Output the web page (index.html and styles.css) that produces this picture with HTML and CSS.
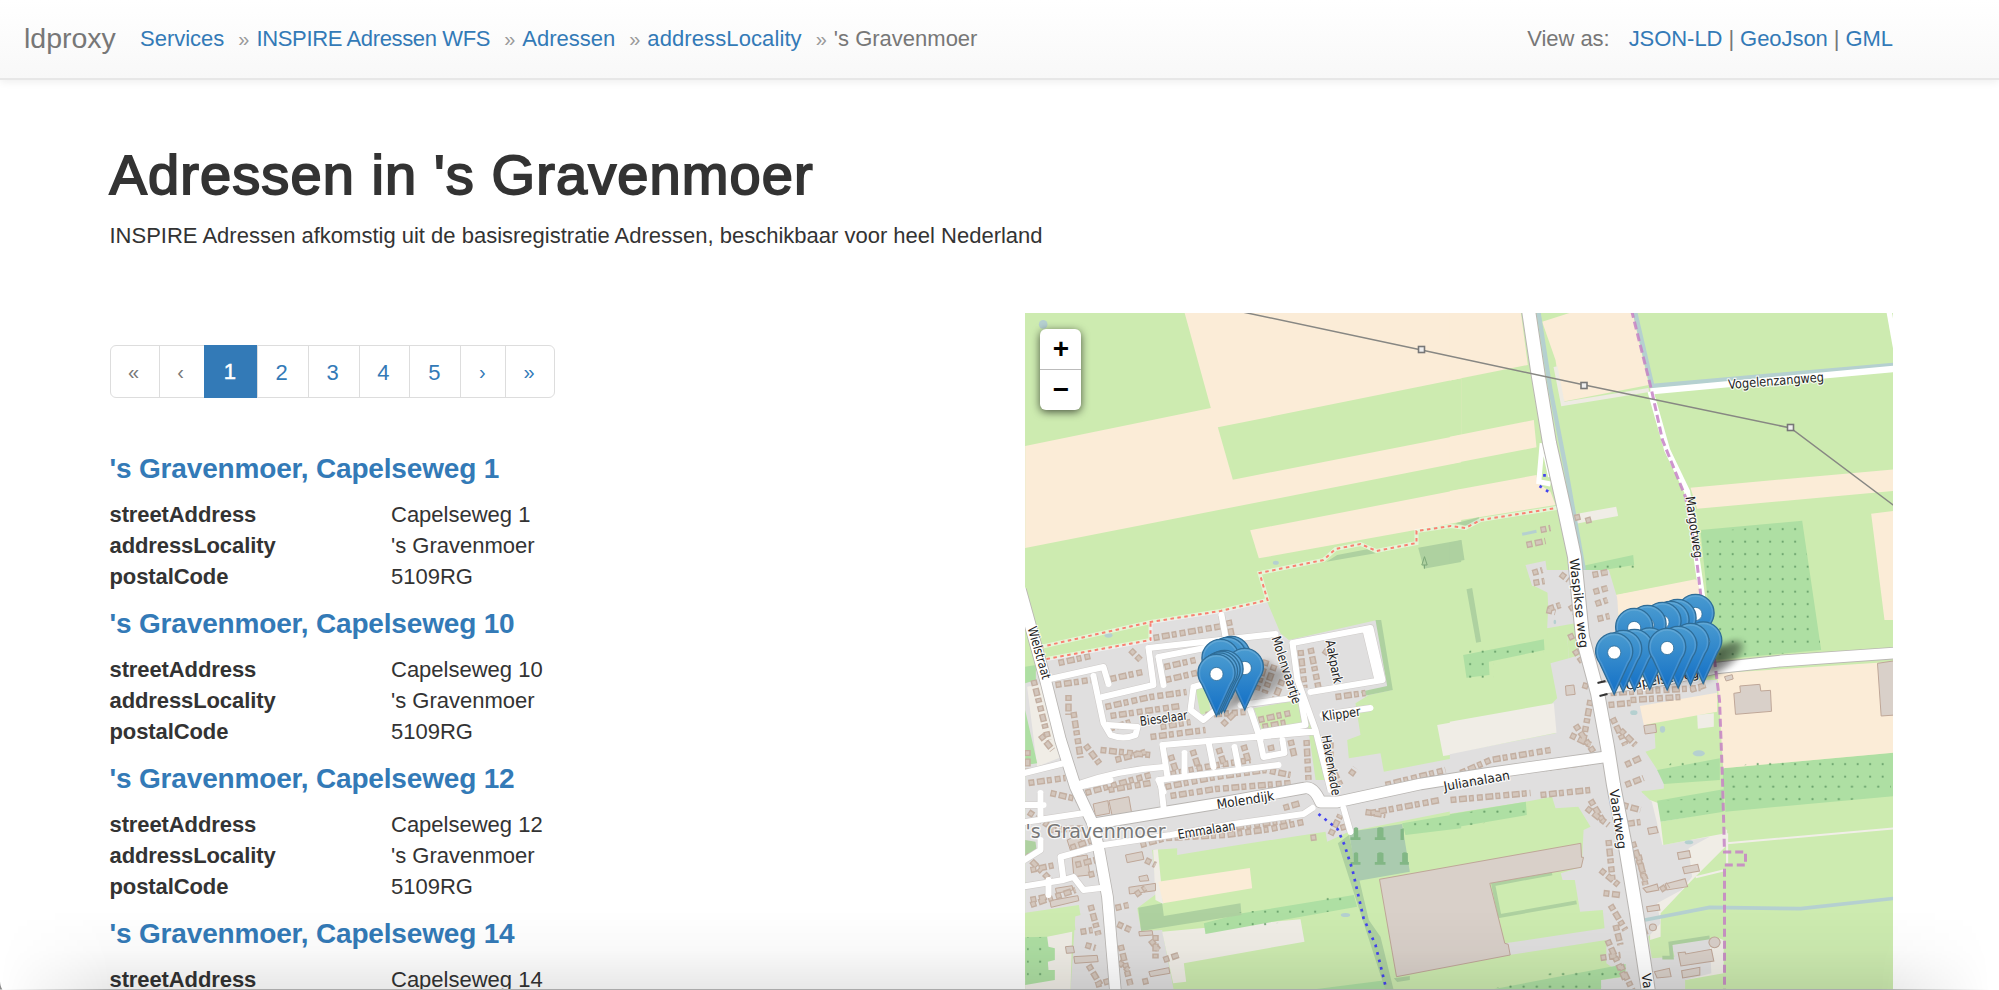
FILE: index.html
```html
<!DOCTYPE html>
<html lang="nl">
<head>
<meta charset="utf-8">
<title>Adressen in 's Gravenmoer</title>
<link rel="stylesheet" href="styles.css">
</head>
<body>
<header class="navbar">
  <div class="brand">ldproxy</div>
  <ol class="breadcrumb">
    <li><a>Services</a></li>
    <li><a class="caps">INSPIRE Adressen WFS</a></li>
    <li><a>Adressen</a></li>
    <li><a class="wide">addressLocality</a></li>
    <li>'s Gravenmoer</li>
  </ol>
  <div class="formats"><span class="formats-label">View as:</span><a>JSON-LD</a><i>|</i><a>GeoJson</a><i>|</i><a>GML</a></div>
</header>
<main class="container">
  <h1>Adressen in 's Gravenmoer</h1>
  <p class="lead">INSPIRE Adressen afkomstig uit de basisregistratie Adressen, beschikbaar voor heel Nederland</p>
  <div class="row">
    <section class="list">
      <ul class="pagination">
        <li class="off edge">«</li><li class="off arrow">‹</li><li class="active">1</li><li>2</li><li>3</li><li>4</li><li>5</li><li class="arrow">›</li><li class="edge">»</li>
      </ul>
      <article><h4>'s Gravenmoer, Capelseweg 1</h4>
        <dl><dt>streetAddress</dt><dd>Capelseweg 1</dd><dt>addressLocality</dt><dd>'s Gravenmoer</dd><dt>postalCode</dt><dd>5109RG</dd></dl></article>
      <article><h4>'s Gravenmoer, Capelseweg 10</h4>
        <dl><dt>streetAddress</dt><dd>Capelseweg 10</dd><dt>addressLocality</dt><dd>'s Gravenmoer</dd><dt>postalCode</dt><dd>5109RG</dd></dl></article>
      <article><h4>'s Gravenmoer, Capelseweg 12</h4>
        <dl><dt>streetAddress</dt><dd>Capelseweg 12</dd><dt>addressLocality</dt><dd>'s Gravenmoer</dd><dt>postalCode</dt><dd>5109RG</dd></dl></article>
      <article><h4>'s Gravenmoer, Capelseweg 14</h4>
        <dl><dt>streetAddress</dt><dd>Capelseweg 14</dd></dl></article>
    </section>
    <section class="map">
      <svg class="tiles" viewBox="1024.5 313 868.5 677" preserveAspectRatio="none">
        <defs>
          <pattern id="dots" width="37.5" height="37.5" patternUnits="userSpaceOnUse" x="1.500" y="0"><circle cx="20" cy="20" r="3.200" fill="#67a06a"/></pattern>
          <linearGradient id="blue" x1="0" y1="0" x2="0" y2="1"><stop offset="0" stop-color="#4a9bd0"/><stop offset="1" stop-color="#126fc6"/></linearGradient>
          <filter id="soft" x="-50%" y="-50%" width="200%" height="200%"><feGaussianBlur stdDeviation="3"/></filter>
          <g id="shade"><path d="M0 0L12-24Q24-44 38-42Q46-34 28-18Z" fill="#000" opacity=".26" filter="url(#soft)"/></g>
          <g id="pin"><path d="M0-1L-14.6-32.5C-17-36-18.6-40-18.6-44A18.6 18.6 0 0 1 18.6-44C18.6-40 17-36 14.6-32.5Z" fill="url(#blue)" stroke="#2e6c97" stroke-width="1.3"/><path d="M0-4L-13.2-33C-15.5-36-17-40-17-44A17 17 0 0 1 17-44C17-40 15.5-36 13.2-33Z" fill="none" stroke="#fff" stroke-opacity=".13" stroke-width="1.5"/><circle cy="-43" r="6.6" fill="#fff" stroke="#2e6c97" stroke-width=".8"/></g>
          <path id="main" d="M1527.7 308L1538 377L1549 443L1564 510L1574 557L1582 637L1597 693L1607 747L1613 785L1625 847L1636 913L1648 992"/>
          <g id="roads">
            <path d="M1598 689L1668 679L1716 668L1780 661L1895 653"/>
            <path d="M1604 757L1483 774L1420 784L1337 802H1320Q1313 786 1304 788L1220 803L1092 824"/>
            <path d="M1020 590L1045 680L1060 740L1075 787L1092 823L1098 847L1107 897L1115 992"/>
          </g>
          <g id="lanes">
            <path d="M1312 808L1303 814L1233 824L1170 835L1103 845L1060 857L1063 880L1020 887M1063 880L1073 877L1083 890L1100 888"/>
            <path d="M1024 822L1084 813M1160 780L1163 807M1077 787L1110 780M1040 793V816M1024 805H1043M1048 880V895M1024 860L1040 850V840"/>
            <path d="M1045 680L1103 667L1108 684M1093 676L1103 723L1110 735Q1123 740 1135 735L1137 727L1107 725M1102 697L1153 685L1148 648M1148 648L1275 634M1158 657L1220 645M1158 657L1163 685M1221 615L1225 637"/>
            <path d="M1193 687L1190 710L1203 720L1215 710M1193 687L1207 683M1240 705L1300 697M1250 710L1260 740M1162 745L1310 732M1162 745L1167 777M1208 742L1213 767M1234 747L1238 767M1184 753V773M1258 733L1263 757L1284 753L1282 740M1262 732L1305 725L1300 697"/>
            <path d="M1075 785Q1117 770 1163 767M1158 780L1278 765M1158 780L1163 792M1292 643L1370 628L1382 680L1310 692M1292 643L1297 680L1315 730M1365 630L1377 680M1315 732L1287 732M1322 715L1370 708M1024 773L1064 763M1315 730L1330 790M1343 808L1350 832"/>
          </g>
        </defs>
        <rect x="1024" y="313" width="870" height="680" fill="#cdebb0"/>
        <!-- fields north-west -->
        <g transform="translate(1020 310) scale(.33333)">
          <path class="farm" d="M490 0H1322V457L14 714V408L571 294Z"/>
          <path class="grass" d="M592 352L1322 205V375L637 509Z"/>
          <path class="farm" d="M689 661L1322 538V635L715 745Z"/>
          <path class="wood" d="M918 755L950 735L1040 718L1065 730ZM1193 713L1322 690V756L1210 776Z"/>
          <circle class="water" cx="68" cy="43" r="13"/><ellipse class="water" cx="766" cy="758" rx="9" ry="6"/>
          <path d="M1212 740L1204 765H1220ZM1212 765V776" fill="none" stroke="#7ba777" stroke-width="3"/>
        </g>
        <!-- fields north-east -->
        <g transform="translate(1450 310) scale(.33333)">
          <path class="farm" d="M-2 0H210L232 165L-2 211.500ZM-2 380L250 330L258 412L-2 462ZM-2 543L258 495L262 520L300 545L315 585L-2 635Z"/>
          <path class="farm" d="M275 35L385 0H545L595 225L335 275L315 150Z"/>
          <path d="M315 170L337 282L595 240" fill="none" stroke="#eeebe3" stroke-width="12"/>
          <path class="farm" d="M720 533L1329 478V543L740 596ZM1262 611L1329 603V930H1302ZM495 855L735 808L760 930H510Z"/>
          <path class="trees" d="M750 660L1055 632L1112 1020L790 1050ZM395 768L548 735L551 765L400 790Z"/>
          <path class="dots" d="M750 670L1055 636L1112 1020L790 1050ZM420 750H553V775H410Z"/>
          <path class="wood" d="M48 838L65 834L92 995L77 998ZM-2 700L33 690L42 750L-2 758ZM15 640L85 622L90 635L50 648Z"/>
          <path class="beige" d="M360 615L497 590L503 618L372 642Z"/>
          <path class="town" d="M225 765L285 752L290 790L475 785L500 930H295L290 825L245 828Z"/>
          <path d="M263 0L300 240L345 470L400 780" fill="none" stroke="#b5d0d0" stroke-width="13"/>
          <path d="M552 0L605 228L1329 165" fill="none" stroke="#b5d0d0" stroke-width="14"/>
          <path d="M600 244L1329 177" fill="none" stroke="#fff" stroke-width="19"/>
          <path d="M600 244L650 420L710 545L755 860" fill="none" stroke="#fff" stroke-width="18"/>
          <path d="M1315 0L1340 140" stroke="#fff" stroke-width="16"/>
          <path d="M275 400L265 515L300 522M285 430L300 500" stroke="#fff" stroke-width="15" fill="none"/>
          <path d="M215 673L258 664" stroke="#b5d0d0" stroke-width="9"/>
        </g>
        <!-- village -->
        <g transform="translate(1020 580) scale(.33333)">
          <path class="town" d="M75 240L390 180L385 130L600 95L740 65L780 160L805 180L1070 120L1115 330L1045 345L1005 370L1020 465L980 480L985 535L1080 520L1090 575L1322 530V632H14V310Z"/>
          <path class="wood" d="M1065 120H1082L1117 330L1030 348L1020 335L1100 318Z"/>
          <path class="beige" d="M20 320L70 310L125 530L50 560ZM1250 435L1322 422V520L1268 528Z"/>
          <path class="trees" d="M14 260L46 255V300L14 310ZM14 390L50 550L14 555Z"/>
          <path class="grass" d="M525 325L560 320L570 395L540 405ZM700 385L830 360L855 440L730 465ZM850 350L890 460L935 632H890L868 480Z"/>
          <ellipse class="water" cx="264" cy="166" rx="12" ry="7"/>
        </g>
        <g transform="translate(1450 570) scale(.33333)">
          <path class="town" d="M232 0H475L505 100L500 250L520 330H800V370L570 410L590 470L612 480L615 535L585 545L640 630V662H-2V550L315 490L305 400L320 385L300 280L355 265L350 195L290 175L295 70L245 45Z"/>
          <path class="grass" d="M290 175L400 155L405 250L355 265L350 195L290 205Z"/>
          <path class="beige" d="M-2 455L310 400L318 488L-2 553Z"/>
          <path class="trees" d="M38 255L280 208L282 240L115 275L117 315L48 323ZM818 595L1329 548V662H815ZM620 600L808 565V630L640 642Z"/>
          <path class="farm" d="M500 75L740 30L790 230L510 260ZM568 408L800 368V425L580 465ZM800 310L1329 275V548L818 595L808 430Z"/>
          <path class="dots" d="M60 235H280V255H130V325H50V260ZM838 600L940 565H1320V640H830ZM640 600L670 570H800V630H640Z"/>
          <path class="beige" d="M740 435L790 430V470L742 476Z"/>
          <path class="house" d="M868 348L928 343L931 363L960 361L963 424L855 433L850 370L870 367ZM1281 280L1335 272V435L1292 438ZM822 320L845 314L848 327L827 333ZM580 467L615 462L618 487L584 492ZM345 348L370 345L374 373L347 376Z"/>
          <ellipse class="water" cx="745" cy="550" rx="18" ry="9"/><ellipse class="water" cx="636" cy="478" rx="8" ry="10"/><ellipse class="water" cx="550" cy="428" rx="11" ry="7"/><ellipse class="water" cx="313" cy="156" rx="4" ry="7"/>
        </g>
        <!-- south-west -->
        <g transform="translate(1020 780) scale(.33333)">
          <path class="town" d="M14 0H1322V88L985 155L920 185L915 155L620 200L470 225V205L395 210L410 340L350 385L362 453L425 450L460 632H150L165 400H14Z"/>
          <path class="grass" d="M14 398L175 375L180 405L160 410L165 450L14 472Z"/>
          <path class="beige" d="M80 470L155 455L150 632H14V600ZM398 210L412 208L428 372L405 360ZM425 455L840 418L852 485L490 550L497 605L458 610Z"/>
          <path class="trees" d="M14 472L80 470L84 500L103 505V540L82 545L84 570L103 570V600L14 615ZM665 400L1000 345L1010 380L555 462L550 430ZM1145 130L1322 100V145L1155 165ZM850 632L1100 600L1105 632Z"/>
          <path class="farm" d="M413 305L688 264L695 325L428 370Z"/>
          <path class="wood" d="M353 383L425 370L430 408L660 370L663 405L362 453ZM14 180L45 185L48 210L14 230ZM952 190L985 165L1045 420L1080 470L1120 632H1095ZM1120 595L1168 588V600L1130 606Z"/>
          <path class="dots" d="M20 472H82V600H20ZM665 395L900 380V350H990V380L680 450H560V430ZM1150 125L1322 110V150H1155Z"/>
          <path d="M985 155L1145 132L1168 275L1010 303Z" fill="#aacbaf"/>
          <path d="M990 180H1020V172H1013V145Q1007 138 1000 145V172H990ZM1063 180H1095V172H1089V145Q1079 138 1070 145V172H1063ZM1063 254H1095V246H1089V220Q1079 213 1070 220V246H1063ZM990 254H1020V246H1013V220Q1007 213 1000 220V246H990ZM1138 254H1165V246H1162V220Q1152 213 1145 220V246H1138ZM1140 180H1150V145L1140 148Z" fill="#82b785"/>
          <path class="house" d="M265 62L325 50L333 97L275 107ZM218 72L262 62L268 100L225 108ZM315 225L365 215L370 238L320 248ZM325 322L405 310V332L327 342ZM355 290L380 285L385 302L358 304ZM160 530L230 526L233 545L163 550ZM385 575L445 563L448 580L390 590ZM135 500L158 498L162 518L138 520ZM355 455L395 452L397 465L357 468ZM88 362L172 347L175 362L92 382ZM105 325L155 317L157 330L108 340ZM155 232L200 225L208 285L160 290ZM140 180Q165 165 185 182L180 212H150Z"/>
          <ellipse class="water" cx="975" cy="405" rx="14" ry="6"/>
        </g>
        <!-- south-east -->
        <g transform="translate(1450 780) scale(.35016 .33333)">
          <path class="beige" d="M570 60L790 150V195L690 300L600 400V470L570 480ZM755 470L780 480V580L670 600Z"/>
          <path class="town" d="M-2 0H590L545 35L575 65L605 195L740 170L680 205L690 290L660 330L590 370L600 430L565 470L575 535L640 530L630 490L740 472L745 580L670 600V632H430V600L500 590L445 550V480L168 525L155 490L440 445L435 390L370 395L355 300H320L315 280L375 260L380 150L400 140L365 80L300 85L290 50L215 65L-2 101Z"/>
          <path class="grass" d="M545 35L780 0V30L590 62ZM600 125L785 92V160L608 195Z"/>
          <path class="trees" d="M-2 103L215 65L218 105L-2 145ZM782 0H1268V48L785 95ZM590 62L780 28V95L600 125ZM100 632L500 552V588L430 600V632Z"/>
          <path class="dots" d="M-2 110L90 88H215V110L-2 145ZM800 0H1258V35L1100 70H785ZM590 62L780 50V75L700 110H600ZM110 630L300 575H495V595H430V632Z"/>
          <path class="house" d="M648 218L682 212L686 232L652 238ZM663 262L706 253L711 273L668 281ZM613 312L670 296L677 320L618 330ZM650 518L670 516L672 522L745 508L752 543L658 558ZM660 572L712 562V585L663 594ZM563 145L588 140L593 158L567 163ZM582 575L625 565L630 590L590 594ZM560 380L595 374L598 390L563 395ZM550 325L590 312L595 330L560 337Z"/>
          <path d="M290 280L122 313L140 408L360 367M605 533H632L628 490L740 472" fill="none" stroke="#aed1a0" stroke-width="11"/>
          <circle class="house" cx="754" cy="487" r="16"/><circle class="house" cx="578" cy="442" r="10"/>
          <path d="M790 190L1268 145M700 292L785 270M790 160V250" fill="none" stroke="#f1eee8" stroke-width="6"/>
          <path d="M555 420L740 382L1000 386L1268 355" fill="none" stroke="#b5d0d0" stroke-width="11"/>
          <ellipse class="water" cx="681" cy="187" rx="12" ry="6"/>
        </g>
        <!-- greenhouse complex -->
        <path class="hall" d="M1379 879.300L1580.300 843.300L1581 857.300H1583L1580.700 867.300L1489.300 883.300L1504.300 943.300L1507.700 944.300L1509.700 955L1396 976.700Z"/>
        <!-- rows of houses -->
        <g class="rows">
          <path id="r1" d="M1153 638L1222 626M1228 620L1232 640M1110 679L1142 672M1058 663L1090 656M1130 650L1140 660M1164 667L1195 660M1165 680L1200 672M1105 707L1150 697L1186 692M1110 716L1180 706M1108 729L1130 722M1160 727L1190 722M1150 737L1205 730M1055 685L1090 680M1068 695V715M1073 712L1080 758M1085 745L1100 765M1100 750L1150 755M1115 760L1145 752M1266 660L1256 690M1274 665L1264 693M1282 680L1274 700M1222 725L1235 712M1205 715L1245 712M1300 650L1304 688M1310 648L1318 688M1323 650L1330 655M1258 720L1290 713M1262 727L1288 722M1335 697L1365 693"/>
          <path id="r2" d="M1170 755L1175 770M1192 750L1198 768M1218 748L1224 766M1243 745L1248 762M1270 745L1272 755M1170 774L1205 767L1250 760M1165 787L1215 777L1265 770L1290 775M1170 796L1215 789L1290 783M1108 790L1150 783M1085 793L1150 775M1290 740L1294 757M1306 740L1308 780M1322 750L1340 785M1330 775V740M1350 775L1355 768M1040 735L1052 750M1033 680L1048 740M1027 750V770M1028 783L1065 778M1050 793L1080 800L1085 812M1028 812L1055 830M1050 830L1085 828M1385 785L1445 770M1370 813L1440 800M1365 812L1385 815"/>
          <path id="r3" d="M1460 773L1490 760L1550 750M1545 768L1590 762M1450 800L1530 793M1540 795L1590 790M1590 700L1583 740M1570 735L1590 745M1575 725L1595 755M1608 705L1630 703M1620 730L1635 745M1612 718L1625 745M1625 765L1640 758M1625 785L1643 778M1622 805L1640 810M1618 825L1640 822M1590 800L1603 822M1586 808L1608 825M1608 840L1612 880M1600 870L1618 885M1603 893L1620 895M1610 905L1625 930M1632 842L1645 880M1638 855L1645 885M1615 925L1620 945M1607 940L1625 980M1600 958L1620 955M1620 965L1632 990M1660 890L1668 885M1645 935L1640 920"/>
          <path id="r4" d="M1592 575L1607 572M1593 592L1607 588M1595 604L1607 600M1597 619L1609 616M1560 574L1568 580M1548 609L1560 605M1570 605L1578 618M1568 638L1576 634M1574 650L1582 662M1582 685L1592 688M1532 573L1542 570M1533 583L1544 581M1526 545L1545 541M1540 530L1550 528M1574 518L1582 516M1585 521L1592 519M1610 693L1700 688M1630 700L1680 697M1690 690L1705 685M1546 610L1555 612"/>
          <path id="r5" d="M1140 845L1165 838L1225 835L1270 829L1303 822M1175 837L1200 832L1290 820M1283 808L1300 803M1310 838L1318 837M1330 835L1340 815M1340 828L1350 825M1070 848L1098 838M1075 865L1095 860M1088 875L1100 872M1030 900L1050 896M1030 905L1075 890M1115 908L1128 905M1117 924L1130 930M1120 945L1130 985M1118 962L1128 970M1150 940L1158 950M1155 935V960M1163 960L1178 955M1142 982L1150 980M1090 905L1098 935M1080 932L1092 930M1085 945L1095 948M1088 965L1100 985M1095 985L1112 980M1135 895L1145 888M1145 860L1155 865M1030 870L1055 865M1025 855L1050 880"/>
        </g>
        <g class="rows-in"><use href="#r1"/><use href="#r2"/><use href="#r3"/><use href="#r4"/><use href="#r5"/></g>
        <!-- streets -->
        <use href="#lanes" class="lane-case"/><use href="#roads" class="road-case"/><use href="#main" class="main-case"/>
        <use href="#lanes" class="lane"/><use href="#roads" class="road"/><use href="#main" class="main-road"/>
        <path d="M1597 683L1605 681M1599 696L1607 694" stroke="#333" stroke-width="2"/>
        <!-- tracks and boundaries -->
        <path class="track-bg" d="M1040 647L1150 622L1220 611L1267 600L1259 573L1323 560L1335 549L1360 544L1376 551L1416 543V531L1450 526L1465 528L1480 520L1556 508M1046 659L1150 640V623"/>
        <path class="track" d="M1040 647L1150 622L1220 611L1267 600L1259 573L1323 560L1335 549L1360 544L1376 551L1416 543V531L1450 526L1465 528L1480 520L1556 508M1046 659L1150 640V623"/>
        <path class="cycle" d="M1318 814L1337 829L1344 845L1352 870L1363 918L1375 945L1386 990M1544 474V477M1539 486L1550 493"/>
        <path class="border" d="M1631 310L1651 390L1662 440L1685 497L1695 550L1702 610L1714 660L1719 700L1722 780L1724 852H1745V865H1724V990"/>
        <!-- power line -->
        <path d="M1242 312L1421 350L1584 385L1790 428L1894 506" fill="none" stroke="#878783" stroke-width="1.5"/>
        <g fill="#eee" stroke="#777" stroke-width="1.6"><rect x="1418" y="346.500" width="6" height="6"/><rect x="1580.500" y="382.500" width="6" height="6"/><rect x="1787" y="424.500" width="6" height="6"/></g>
        <!-- names -->
        <g class="names">
          <text transform="translate(1728 389) rotate(-4.500)" textLength="96" lengthAdjust="spacingAndGlyphs">Vogelenzangweg</text>
          <text transform="translate(1685 497) rotate(82)" textLength="62" lengthAdjust="spacingAndGlyphs">Margotweg</text>
          <text transform="translate(1569 559) rotate(83.500)" textLength="90" lengthAdjust="spacingAndGlyphs">Waspikse weg</text>
          <text transform="translate(1027 628) rotate(74)" textLength="54" lengthAdjust="spacingAndGlyphs">Wielstraat</text>
          <text transform="translate(1140 726) rotate(-8)" textLength="48" lengthAdjust="spacingAndGlyphs">Bieselaar</text>
          <text transform="translate(1271 638) rotate(72)" textLength="70" lengthAdjust="spacingAndGlyphs">Molenvaartje</text>
          <text transform="translate(1325 641) rotate(79)" textLength="44" lengthAdjust="spacingAndGlyphs">Aakpark</text>
          <text transform="translate(1322 721) rotate(-8)" textLength="39" lengthAdjust="spacingAndGlyphs">Klipper</text>
          <text transform="translate(1321 736) rotate(80)" textLength="61" lengthAdjust="spacingAndGlyphs">Havenkade</text>
          <text transform="translate(1217 809) rotate(-9)" textLength="58" lengthAdjust="spacingAndGlyphs">Molendijk</text>
          <text transform="translate(1178 839) rotate(-9)" textLength="58" lengthAdjust="spacingAndGlyphs">Emmalaan</text>
          <text transform="translate(1444 791) rotate(-10)" textLength="67" lengthAdjust="spacingAndGlyphs">Julianalaan</text>
          <text transform="translate(1609 790) rotate(82)" textLength="60" lengthAdjust="spacingAndGlyphs">Vaartweg</text>
          <text transform="translate(1641 974) rotate(82)" textLength="15" lengthAdjust="spacingAndGlyphs">Va</text>
          <text transform="translate(1626 690) rotate(-10)" textLength="74" lengthAdjust="spacingAndGlyphs">Capelseweg</text>
          <text class="place" x="1025" y="838" textLength="140" lengthAdjust="spacingAndGlyphs">'s Gravenmoer</text>
        </g>
        <!-- markers -->
        <use href="#shade" x="1232" y="704"/><use href="#shade" x="1244" y="710"/><use href="#shade" x="1218" y="717"/>
        <use href="#shade" x="1614" y="694"/><use href="#shade" x="1650" y="690"/><use href="#shade" x="1667" y="691"/><use href="#shade" x="1685" y="686"/><use href="#shade" x="1697" y="684"/><use href="#shade" x="1703" y="683"/>
        <use href="#pin" x="1231" y="699"/><use href="#pin" x="1227" y="700"/><use href="#pin" x="1220" y="702"/><use href="#pin" x="1244.300" y="711"/><use href="#pin" x="1224" y="713"/><use href="#pin" x="1221" y="714"/><use href="#pin" x="1218.500" y="715.500"/><use href="#pin" x="1216" y="717"/>
        <use href="#pin" x="1695" y="657"/><use href="#pin" x="1677" y="662"/><use href="#pin" x="1670" y="664"/><use href="#pin" x="1662" y="665"/><use href="#pin" x="1647" y="668"/><use href="#pin" x="1633.700" y="671"/>
        <use href="#pin" x="1702.700" y="684.500"/><use href="#pin" x="1690" y="686"/><use href="#pin" x="1677.700" y="689"/><use href="#pin" x="1649.300" y="690.500"/><use href="#pin" x="1634" y="692"/><use href="#pin" x="1666.700" y="691"/><use href="#pin" x="1622.700" y="693"/><use href="#pin" x="1613.700" y="695.500"/>
      </svg>
      <div class="zoom"><span>+</span><span>−</span></div>
    </section>
  </div>
</main>
<div class="window-edge"></div>
<svg class="corner" viewBox="0 0 10 20"><path d="M0 0Q1 14 6 20H0Z" fill="#8b8b8b"/></svg>
</body>
</html>
```
FILE: styles.css
```css
* { box-sizing: border-box; }
html, body { height: 990px; overflow: hidden; }
body { margin: 0; position: relative; background: #fff; color: #333; font: 22px/31.2px "Liberation Sans", Arial, Helvetica, sans-serif; }
a { color: #337ab7; }
ul, ol, dl, dd, h1, h4, p { margin: 0; padding: 0; }
li { list-style: none; }

.navbar { height: 80px; display: flex; align-items: center; padding: 2px 106px 2px 24px; border-bottom: 2px solid #e7e7e7; background: linear-gradient(#fff, #f8f8f8); box-shadow: 0 2px 8px rgba(0, 0, 0, .07); color: #777; white-space: nowrap; }
.brand { font-size: 28.5px; width: 116px; }
.breadcrumb { display: flex; flex: 1; }
.breadcrumb li + li::before { content: "»"; color: #999; font-size: 20px; margin: 0 7px 0 14px; }
.breadcrumb .caps { letter-spacing: -.36px; }
.breadcrumb .wide { letter-spacing: .1px; }
.formats { display: flex; letter-spacing: -.05px; }
.formats-label { margin-right: 19px; }
.formats i { font-style: normal; margin: 0 6px; }

.container { height: 910px; overflow: hidden; padding: 61px 106px 0 109.5px; }
h1 { font-size: 56px; line-height: 68px; font-weight: 400; letter-spacing: 1.1px; -webkit-text-stroke: 1.9px #333; white-space: nowrap; }
.lead { margin-top: 11px; white-space: nowrap; }
.row { display: flex; justify-content: space-between; margin-top: 62px; }
.list { padding-top: 31.5px; }
.pagination { display: flex; width: 445px; height: 53px; margin-bottom: 54px; border: 1.5px solid #ddd; border-radius: 6px; line-height: 53px; text-align: center; color: #337ab7; }
.pagination li { width: 51.3px; padding-right: 2px; border-left: 1.5px solid #ddd; }
.pagination li:first-child { border-left: 0; }
.pagination .edge { width: 48.5px; font-size: 20px; }
.pagination .arrow { width: 45.5px; font-size: 20px; }
.pagination .off { color: #777; }
.pagination .active { width: 53.5px; margin: -1px 0; line-height: 54px; background: #337ab7; color: #fff; border-color: #337ab7; -webkit-text-stroke: .5px #fff; }
article { height: 155px; }
h4 { font-size: 28px; line-height: 34px; font-weight: 700; color: #337ab7; letter-spacing: -.17px; white-space: nowrap; margin-bottom: 13px; }
dl { display: grid; grid-template-columns: 281.5px auto; line-height: 31.2px; }
dt { font-weight: 700; letter-spacing: -.1px; }

.map { position: relative; width: 868.5px; height: 677px; overflow: hidden; }
.tiles { display: block; width: 100%; height: 100%; }
.zoom { position: absolute; left: 15.5px; top: 16px; width: 41px; height: 81px; border-radius: 6px; background: #fff; box-shadow: 0 2px 8px rgba(0, 0, 0, .65); color: #000; font: 700 28px/40px "Liberation Sans", Arial, sans-serif; text-align: center; }
.zoom span { display: block; height: 40px; padding-left: 1px; }
.zoom span + span { border-top: 1px solid #bbb; }

.farm { fill: #fbecd7; }
.grass { fill: #cdebb0; }
.town { fill: #e0dfdf; }
.wood { fill: #aed1a0; }
.beige { fill: #f0ede6; }
.water { fill: #b5d0d0; }
.trees { fill: #aedfa3; }
.dots { fill: url(#dots); }
.house { fill: #d9d0c9; stroke: #bfa798; stroke-width: 3; }
.hall { fill: #d9d0c9; stroke: #bfa798; stroke-width: 1; }
.rows { fill: none; stroke: #c3afa1; stroke-width: 6.5; stroke-dasharray: 6 2.5 8 2 5 3; }
.rows-in { fill: none; stroke: #d3c6bc; stroke-width: 3.5; stroke-dasharray: 3.5 5 5.5 4.5 2.5 5.5; stroke-dashoffset: -1.2; }
.lane-case, .road-case, .main-case { fill: none; stroke: #b9b6b3; stroke-linejoin: round; }
.lane, .road, .main-road { fill: none; stroke: #fff; stroke-linejoin: round; stroke-linecap: round; }
.lane-case { stroke: #cfccca; stroke-width: 7.2; }
.lane { stroke-width: 6; }
.road-case { stroke-width: 12.5; }
.road { stroke-width: 10.8; }
.main-case { stroke-width: 15; }
.main-road { stroke-width: 13; }
.track-bg { fill: none; stroke: #fff; stroke-opacity: .5; stroke-width: 4; }
.track { fill: none; stroke: #fa8072; stroke-width: 2; stroke-dasharray: 3.5 3.5; }
.cycle { fill: none; stroke: #4444ee; stroke-width: 2.7; stroke-dasharray: 2.7 5; }
.border { fill: none; stroke: #c583c5; stroke-width: 3; stroke-dasharray: 8 4; stroke-opacity: .85; }
.names { font: 13px "DejaVu Sans", "Noto Sans", sans-serif; fill: #222; stroke: #fff; stroke-opacity: .8; stroke-width: 2.5; paint-order: stroke; stroke-linejoin: round; }
.place { font-size: 19px; fill: #777; }

.window-edge { position: absolute; left: 0; right: 0; bottom: 0; height: 80px; background: linear-gradient(transparent, rgba(0, 0, 0, .025) 50%, rgba(0, 0, 0, .09)); border-bottom: 1px solid #aaa; -webkit-mask-image: linear-gradient(90deg, transparent, #000 110px, #000 1880px, transparent 1990px); mask-image: linear-gradient(90deg, transparent, #000 110px, #000 1880px, transparent 1990px); pointer-events: none; }
.corner { position: absolute; left: 0; bottom: 0; width: 4px; height: 9px; }
```
